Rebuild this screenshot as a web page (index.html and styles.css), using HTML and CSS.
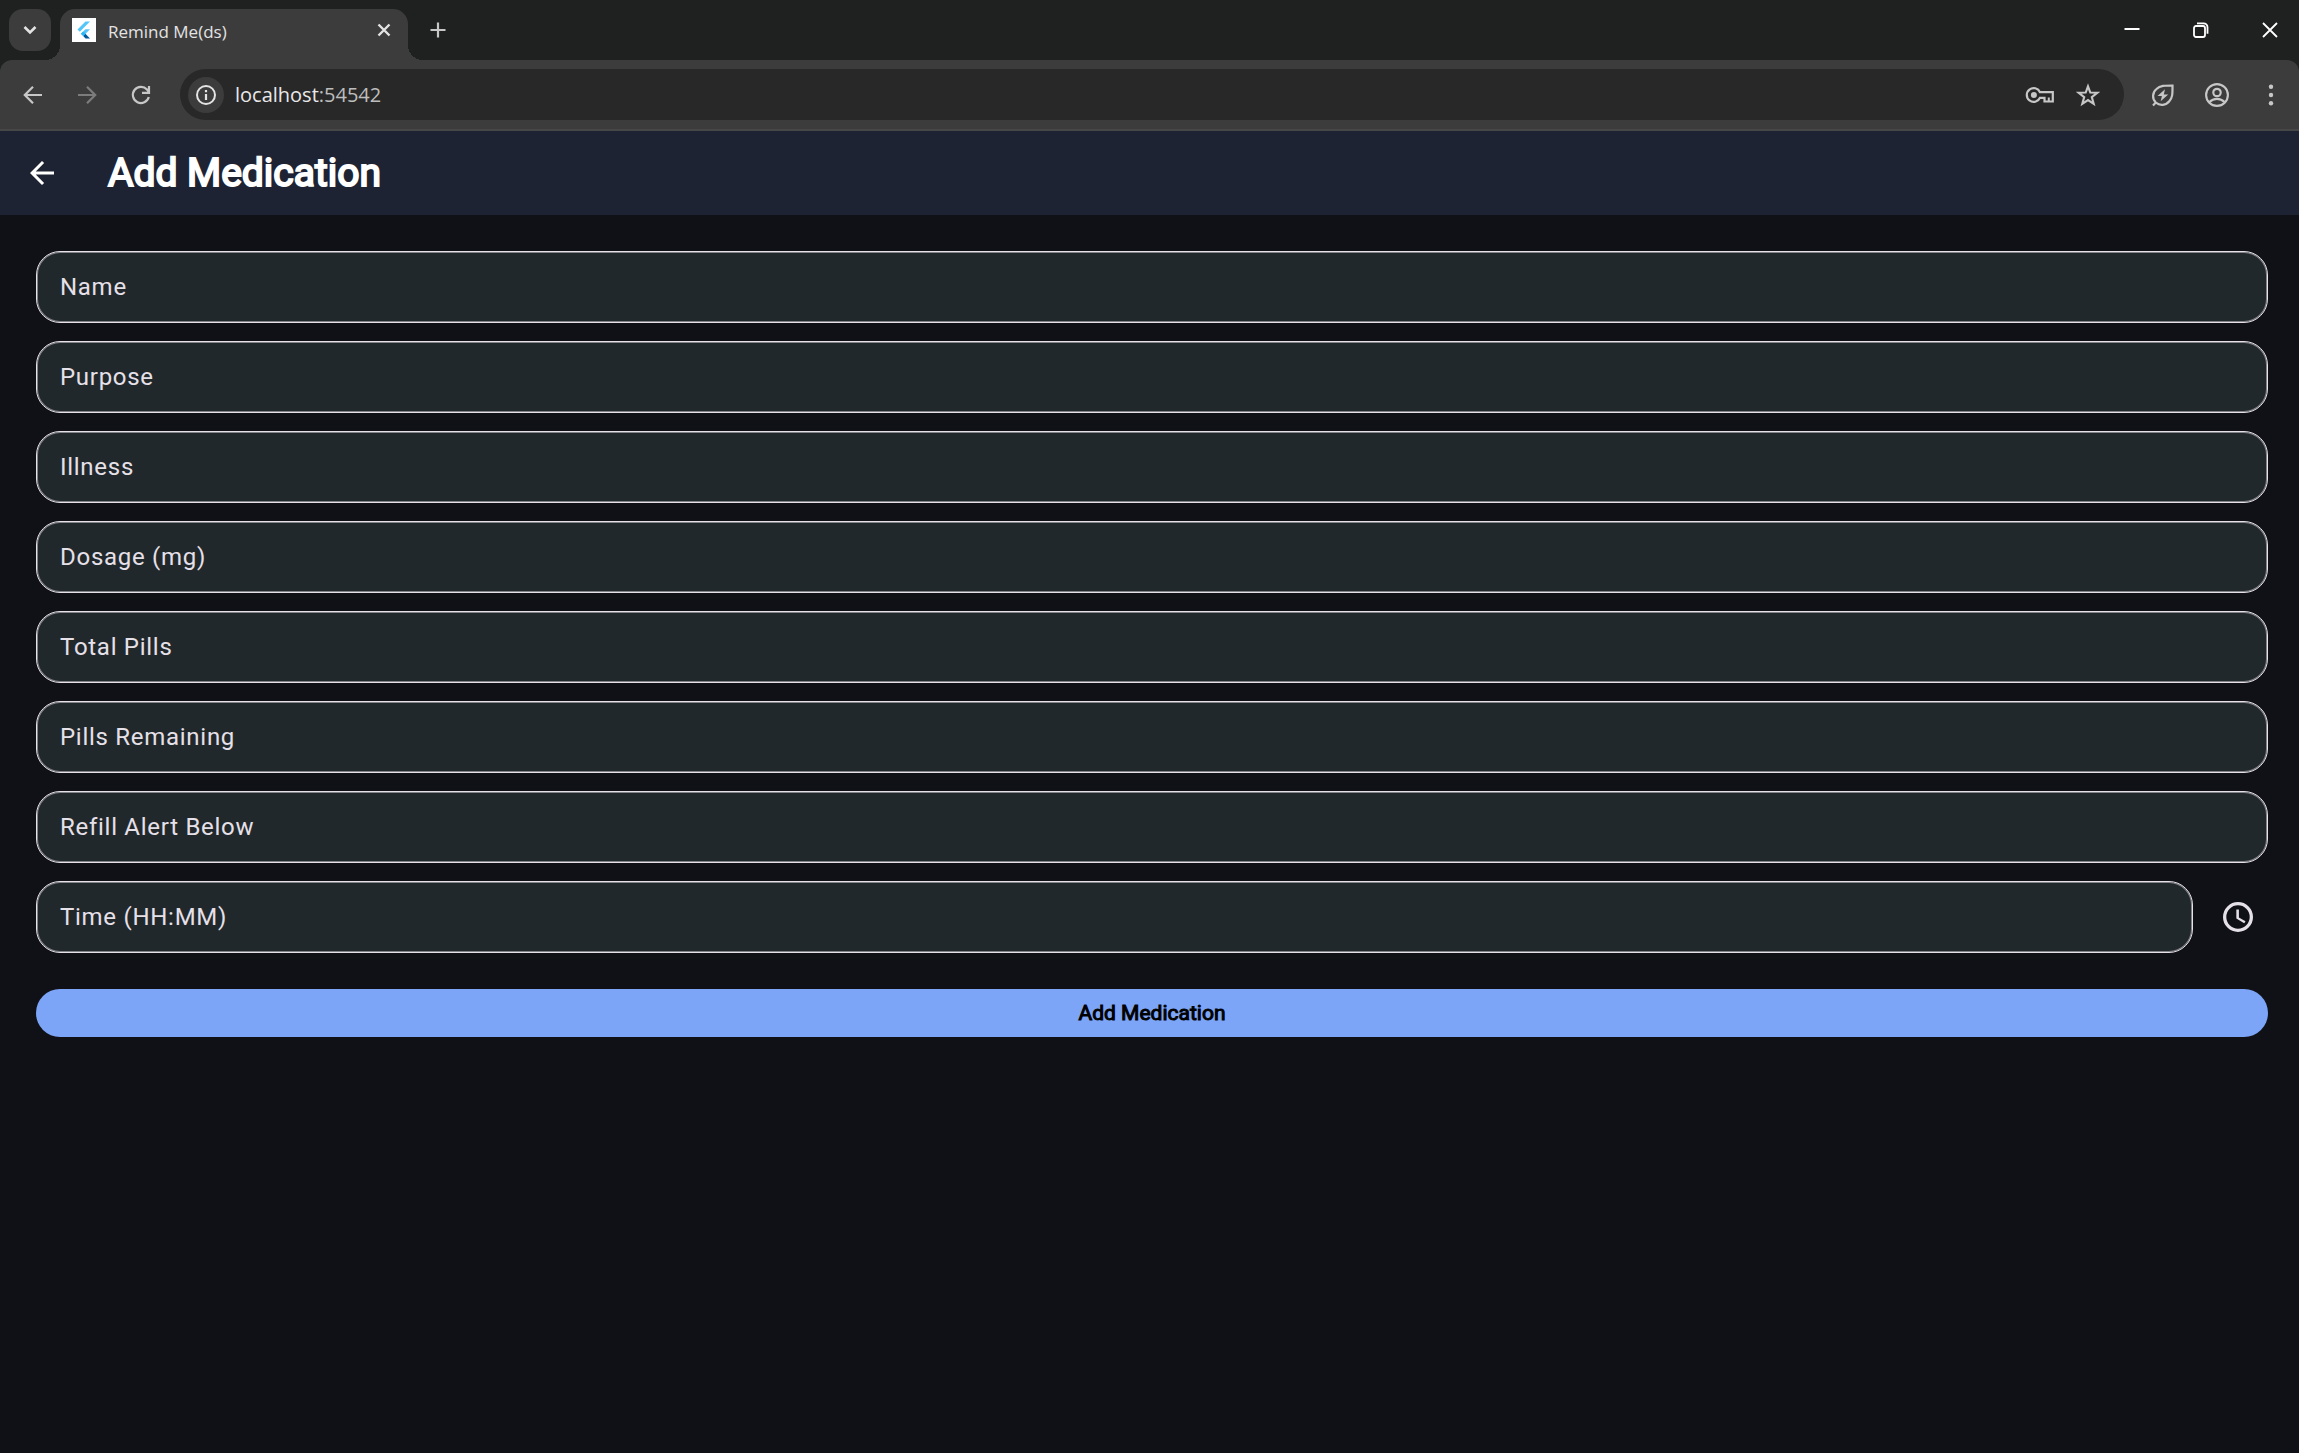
FILE: index.html
```html
<!DOCTYPE html>
<html lang="en">
<head>
    <meta charset="UTF-8">
    <meta name="viewport" content="width=device-width, initial-scale=1.0">
    <title>Remind Me(ds)</title>
    <link rel="stylesheet" href="styles.css">
</head>
<body>
    <div class="browser">
        <!-- Tab strip -->
        <div class="tab-strip">
            <button class="tab-search" aria-label="Search tabs">
                <svg width="18" height="18" viewBox="0 0 18 18"><path d="M3.5 6l5.5 5.5L14.5 6" stroke-width="2.6"/></svg>
            </button>
            <div class="tab">
                <svg class="favicon" width="24" height="24" viewBox="0 0 24 24">
                    <rect width="24" height="24" fill="#fff"/>
                    <path d="M13.5 3.5H18L7.8 13.7L5.5 11.4Z" fill="#54c5f8"/>
                    <path d="M13.5 11.2H18L13.3 15.9L11.2 18L8.8 15.7Z" fill="#54c5f8"/>
                    <path d="M11.2 18L13.4 15.8L18 20.5H13.5Z" fill="#01579b"/>
                    <path d="M8.9 15.7L11.2 13.4L13.5 15.7L11.2 18Z" fill="#29b6f6"/>
                </svg>
                <span class="tab-title">Remind Me(ds)</span>
                <button class="tab-close" aria-label="Close tab">
                    <svg width="18" height="18" viewBox="0 0 18 18"><path d="M3.5 3.5l11 11M14.5 3.5l-11 11" stroke-width="2.4"/></svg>
                </button>
            </div>
            <button class="new-tab" aria-label="New tab">
                <svg width="18" height="18" viewBox="0 0 18 18"><path d="M9 1.5v15M1.5 9h15" stroke-width="2.2"/></svg>
            </button>
            <div class="window-controls">
                <button aria-label="Minimize"><svg width="18" height="18" viewBox="0 0 18 18"><path d="M1.5 8h15" stroke-width="2"/></svg></button>
                <button aria-label="Restore">
                    <svg width="18" height="18" viewBox="0 0 18 18"><rect x="2" y="5" width="11" height="11" rx="2" stroke-width="1.8"/><path d="M5 2.3h6.5a4 4 0 0 1 4 4v6.5" stroke-width="1.8"/></svg>
                </button>
                <button aria-label="Close"><svg width="18" height="18" viewBox="0 0 18 18"><path d="M2 2l14 14M16 2L2 16" stroke-width="1.8"/></svg></button>
            </div>
        </div>

        <!-- Toolbar -->
        <div class="toolbar">
            <button class="tool" aria-label="Back">
                <svg width="24" height="24" viewBox="0 0 24 24"><path d="M21 12H4.5M12 3.8L3.8 12l8.2 8.2" stroke-width="2.2"/></svg>
            </button>
            <button class="tool" aria-label="Forward" disabled>
                <svg width="24" height="24" viewBox="0 0 24 24"><path d="M3 12h16.5M12 3.8l8.2 8.2l-8.2 8.2" stroke-width="2.2"/></svg>
            </button>
            <button class="tool" aria-label="Reload">
                <svg width="24" height="24" viewBox="0 0 24 24"><path d="M19.8 14a8.1 8.1 0 1 1-1.8-7.5l2.1 2.6M20 3v6.9h-7" stroke-width="2.2"/></svg>
            </button>
            <div class="address-bar">
                <button class="site-info" aria-label="Site information">
                    <svg width="24" height="24" viewBox="0 0 24 24"><circle cx="12" cy="12" r="9" stroke-width="2"/><path d="M12 11v6M12 7v2.3" stroke-width="2.2"/></svg>
                </button>
                <span class="url">localhost<span class="port">:54542</span></span>
                <button class="bar-icon" aria-label="Passwords">
                    <svg width="30" height="24" viewBox="0 0 30 24"><path d="M15 9.2A6.9 6.9 0 1 0 15 14.8H19.5V18.5H27.8V9.2Z" stroke-width="2.2"/><path d="M23.8 18.5V14.5" stroke-width="2"/><circle cx="8.9" cy="12" r="3" class="solid"/></svg>
                </button>
                <button class="bar-icon" aria-label="Bookmark this tab">
                    <svg width="24" height="24" viewBox="0 0 24 24"><path d="M12 3.3l2.3 6.2l6.9.3l-5.4 4.3l1.9 6.7L12 17.1l-5.7 3.7l1.9-6.7l-5.4-4.3l6.9-.3Z" stroke-width="2.1"/></svg>
                </button>
            </div>
            <button class="tool" aria-label="Energy saver">
                <svg width="24" height="24" viewBox="0 0 24 24"><path d="M4.8 19.5A9 9 0 0 1 5.5 6C9 2.5 14 2.5 21.5 2.5C21.5 10 21.8 14.5 18.3 18.3A9.3 9.3 0 0 1 4.8 19.5ZM4.8 19.5L2 22.5" stroke-width="2.2"/><path d="M14 6.3L6.5 13h4.4l-1.2 5.2L17.2 11.5h-4.4Z" class="solid"/></svg>
            </button>
            <button class="tool" aria-label="Profile">
                <svg width="24" height="24" viewBox="0 0 24 24"><circle cx="12" cy="12" r="10.9" stroke-width="2.1"/><circle cx="12" cy="9.5" r="3.7" stroke-width="2.2"/><path d="M4.5 19c4-4.3 11-4.3 15 0" stroke-width="2.2"/></svg>
            </button>
            <button class="tool" aria-label="Menu">
                <svg width="24" height="24" viewBox="0 0 24 24"><g class="solid"><circle cx="12" cy="3.8" r="2.2"/><circle cx="12" cy="12" r="2.2"/><circle cx="12" cy="20.2" r="2.2"/></g></svg>
            </button>
        </div>
    </div>

    <header class="app-bar">
        <button class="back-button" aria-label="Back">
            <svg width="36" height="36" viewBox="0 0 24 24"><path d="M20 11H7.83l5.59-5.59L12 4l-8 8 8 8 1.41-1.41L7.83 13H20v-2z" class="solid"/></svg>
        </button>
        <h1>Add Medication</h1>
    </header>

    <form class="med-form">
        <div class="field">
            <label for="name">Name</label>
            <input type="text" id="name">
        </div>
        <div class="field">
            <label for="purpose">Purpose</label>
            <input type="text" id="purpose">
        </div>
        <div class="field">
            <label for="illness">Illness</label>
            <input type="text" id="illness">
        </div>
        <div class="field">
            <label for="dosage">Dosage (mg)</label>
            <input type="text" id="dosage">
        </div>
        <div class="field">
            <label for="total">Total Pills</label>
            <input type="text" id="total">
        </div>
        <div class="field">
            <label for="remaining">Pills Remaining</label>
            <input type="text" id="remaining">
        </div>
        <div class="field">
            <label for="refill">Refill Alert Below</label>
            <input type="text" id="refill">
        </div>
        <div class="time-row">
            <div class="field">
                <label for="time">Time (HH:MM)</label>
                <input type="text" id="time">
            </div>
            <button type="button" class="clock-button" aria-label="Pick a time">
                <svg width="36" height="36" viewBox="0 0 24 24"><circle cx="12" cy="12" r="8.9" stroke-width="2.2"/><path d="M12.6 7H10.9v6l5.25 3.15.85-1.33-4.4-2.57z" class="solid"/></svg>
            </button>
        </div>
        <button type="button" class="submit-button">Add Medication</button>
    </form>
</body>
</html>
```
FILE: styles.css
```css
:root {
    --strip: #1f2120;
    --toolbar: #3c3c3c;
    --omnibox: #282828;
    --page: #101116;
    --app-bar: #1e2333;
    --field: #21282b;
    --text: #e6e0e9;
    --accent: #7ca5f8;
}

* {
    box-sizing: border-box;
}

body {
    margin: 0;
    min-height: 100vh;
    background: var(--page);
    color: var(--text);
    font-family: Roboto, sans-serif;
}

button {
    display: flex;
    align-items: center;
    justify-content: center;
    flex-shrink: 0;
    padding: 0;
    border: none;
    background: none;
    color: inherit;
    font-family: inherit;
    cursor: pointer;
}

svg {
    display: block;
    fill: none;
    stroke: currentColor;
}

svg .solid {
    fill: currentColor;
    stroke: none;
}

/* Browser window */
.browser {
    background: var(--strip);
    color: #e3e3e3;
    font-family: "Open Sans", sans-serif;
}

.tab-strip {
    display: flex;
    height: 60px;
    padding: 9px 2px 0 9px;
}

.tab-search {
    width: 42px;
    height: 42px;
    border-radius: 14px;
    background: var(--toolbar);
}

.tab {
    position: relative;
    display: flex;
    align-items: flex-start;
    width: 348px;
    height: 51px;
    margin-left: 9px;
    padding: 9px 12px 0;
    border-radius: 15px 15px 0 0;
    background: var(--toolbar);
}

/* curved feet of the active tab */
.tab::before,
.tab::after {
    content: '';
    position: absolute;
    bottom: 0;
    width: 15px;
    height: 15px;
}

.tab::before {
    right: 100%;
    background: radial-gradient(circle at 0 0, transparent 15px, var(--toolbar) 15px);
}

.tab::after {
    left: 100%;
    background: radial-gradient(circle at 100% 0, transparent 15px, var(--toolbar) 15px);
}

.favicon {
    stroke: none;
}

.tab-title {
    flex: 1;
    margin-left: 12px;
    font-size: 17px;
    line-height: 28px;
}

.tab-close {
    width: 24px;
    height: 24px;
}

.new-tab {
    width: 42px;
    height: 42px;
    margin-left: 9px;
    color: #c7c7c7;
}

.window-controls {
    display: flex;
    gap: 15px;
    margin-left: auto;
    color: #fff;
}

.window-controls button {
    width: 54px;
    height: 42px;
}

.toolbar {
    display: flex;
    align-items: center;
    height: 71px;
    padding: 0 1px 0 6px;
    border-bottom: 2px solid #474747;
    border-radius: 12px 12px 0 0;
    background: var(--toolbar);
    color: #c7c7c7;
}

.tool {
    width: 54px;
    height: 48px;
}

.tool:disabled {
    color: #7c7c7c;
}

.address-bar {
    display: flex;
    align-items: center;
    flex: 1;
    height: 51px;
    margin: 0 12px;
    padding: 0 12px 0 8px;
    border-radius: 26px;
    background: var(--omnibox);
}

.site-info {
    width: 36px;
    height: 36px;
    border-radius: 50%;
    background: var(--toolbar);
    color: #e3e3e3;
}

.url {
    flex: 1;
    margin-left: 11px;
    color: #e8e8e8;
    font-size: 20px;
    line-height: 28px;
}

.port {
    color: #bdbdbd;
}

.bar-icon {
    width: 48px;
    height: 48px;
}

/* App */
.app-bar {
    display: flex;
    align-items: center;
    height: 84px;
    padding-left: 6px;
    background: var(--app-bar);
    color: #fff;
}

.back-button {
    width: 72px;
    height: 72px;
}

.app-bar h1 {
    margin: 0 0 0 30px;
    font-size: 39px;
    font-weight: 400;
    line-height: 48px;
    -webkit-text-stroke: 2px currentColor;
}

.med-form {
    display: flex;
    flex-direction: column;
    gap: 18px;
    padding: 36px 31px 36px 36px;
}

.field {
    display: flex;
    align-items: center;
    flex: 1;
    height: 72px;
    padding: 0 23px;
    border: 1px solid var(--text);
    border-radius: 24px;
    background: var(--field);
    box-shadow: inset 0 0 0 1px rgba(230, 224, 233, 0.5);
    font-size: 24px;
    line-height: 36px;
    letter-spacing: 0.03em;
}

.med-form > .field {
    flex: none;
}

.field input {
    flex: 1;
    min-width: 0;
    height: 100%;
    padding: 0 0 0 12px;
    border: none;
    outline: none;
    background: transparent;
    color: inherit;
    font: inherit;
}

.time-row {
    display: flex;
    align-items: center;
    gap: 15px;
}

.clock-button {
    width: 60px;
    height: 60px;
    color: var(--text);
}

.submit-button {
    height: 48px;
    margin-top: 18px;
    border-radius: 24px;
    background: var(--accent);
    color: #000;
    font-size: 21px;
    font-weight: 400;
    line-height: 30px;
    -webkit-text-stroke: 1px currentColor;
}
```
